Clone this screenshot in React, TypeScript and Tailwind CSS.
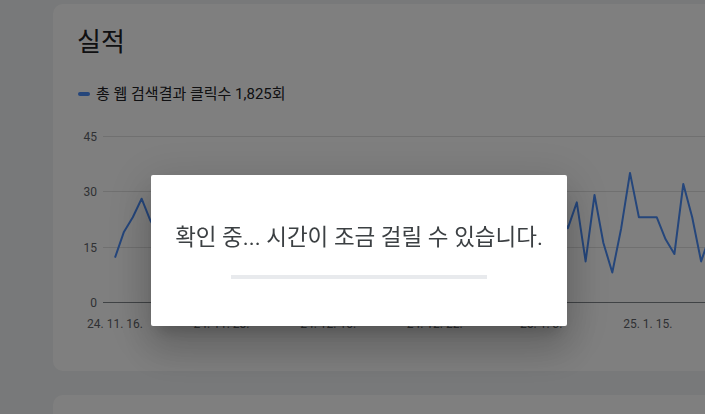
import React from "react";

const FONT = "font-['Roboto','Noto_Sans_CJK_KR',sans-serif]";

// daily clicks, starting 24. 11. 16.
const clicks = [
  12, 19, 23, 28, 22, 18, 15, 24, 20, 13, 26, 19, 22, 30, 17, 21, 14, 25, 19, 23, 16, 28, 20, 12, 24, 18,
  22, 15, 27, 21, 17, 25, 11, 19, 23, 16, 20, 29, 14, 18, 22, 13, 26, 19, 24, 15, 21, 31, 17, 12, 24, 20,
  27, 11, 29, 16, 8, 20, 35, 23, 23, 23, 17, 13, 32, 23, 11, 18, 25, 20, 14,
];

const xLabels = ["24. 11. 16.", "24. 11. 28.", "24. 12. 10.", "24. 12. 22.", "25. 1. 3.", "25. 1. 15."];
const yTicks = [45, 30, 15, 0];

const X0 = 37;
const DX = 8.88;
const Y0 = 183;
const YS = 166 / 45;

function PerformanceChart() {
  const points = clicks.map((v, i) => `${(X0 + DX * i).toFixed(1)},${(Y0 - v * YS).toFixed(1)}`).join(" ");
  return (
    <svg width={710} height={220} className="mt-[15px] block">
      {yTicks.map((t) => {
        const y = Math.round(Y0 - t * YS) + 0.5;
        return (
          <g key={t}>
            <line x1={25} x2={710} y1={y} y2={y} stroke={t === 0 ? "#80868b" : "#e0e0e0"} strokeWidth={1} />
            <text x={19} y={y + 4} textAnchor="end" fontSize={12} fill="#5f6368" fontFamily="Roboto, sans-serif">
              {t}
            </text>
          </g>
        );
      })}
      {xLabels.map((l, i) => (
        <text
          key={l}
          x={X0 + DX * 12 * i}
          y={209}
          textAnchor="middle"
          fontSize={12}
          fill="#5f6368"
          fontFamily="Roboto, sans-serif"
        >
          {l}
        </text>
      ))}
      <polyline points={points} fill="none" stroke="#4a8cf7" strokeWidth={2} strokeLinejoin="round" />
    </svg>
  );
}

export default function App() {
  return (
    <div className={`relative h-[414px] w-[705px] overflow-hidden bg-[#f1f3f4] ${FONT}`}>
      <div className="flex flex-col gap-6 pt-1 pl-[53px]">
        <section className="h-[367px] w-[760px] shrink-0 rounded-[10px] bg-white px-[25px] pt-[22px]">
          <h2 className="-ml-px text-[26px] leading-8 font-normal text-[#202124]">실적</h2>
          <div className="mt-[26px] flex h-5 items-center gap-[6px] text-[15px] leading-5 text-[#202124]">
            <span className="h-[4px] w-[12px] rounded-full bg-[#4a8cf7]" />
            <span>총 웹 검색결과 클릭수 1,825회</span>
          </div>
          <PerformanceChart />
        </section>
        <section className="h-[300px] w-[760px] shrink-0 rounded-[10px] bg-white" />
      </div>

      <div className="fixed inset-0 z-40 bg-black/50" />

      <div className="fixed top-[175px] left-[151px] z-50 flex w-[416px] flex-col items-center rounded-[2px] bg-white pt-[47px] pb-[47px] shadow-[0_11px_15px_-7px_rgba(0,0,0,0.2),0_24px_38px_3px_rgba(0,0,0,0.14),0_9px_46px_8px_rgba(0,0,0,0.12)]">
        <p className="text-[22.5px] leading-[30px] text-[#3c4043]">확인 중... 시간이 조금 걸릴 수 있습니다.</p>
        <div className="mt-[23px] h-[4px] w-[256px] bg-[#e8eaed]" />
      </div>
    </div>
  );
}
